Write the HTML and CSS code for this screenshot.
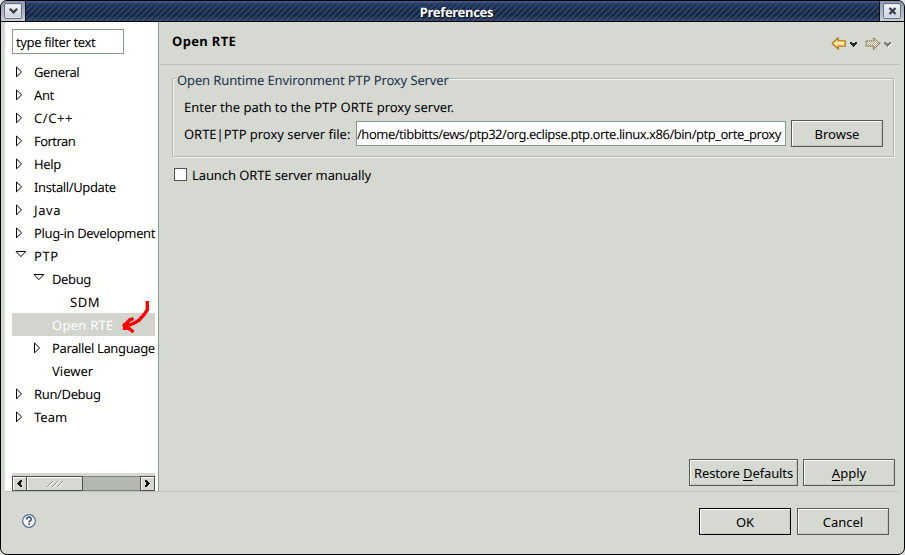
FILE: index.html
```
<!DOCTYPE html>
<html lang="en">
<head>
<meta charset="utf-8">
<title>Preferences</title>
<link rel="stylesheet" href="styles.css">
</head>
<body>
<svg class="defs" width="0" height="0">
  <symbol id="closed" viewBox="0 0 7 12"><path d="M.5 1v9.8L5.6 5.9z" fill="#fff" stroke="#000"/></symbol>
  <symbol id="open" viewBox="0 0 12 7"><path d="M1 .5h9.8L5.9 5.6z" fill="#fff" stroke="#000"/></symbol>
</svg>
<div class="window">
  <header class="titlebar">
    <div class="corner left"><span class="winbtn"><svg width="15" height="14" viewBox="0 0 15 14"><path d="M3.8 4.7l3.7 3.6 3.7-3.6" fill="none" stroke="#354052" stroke-width="2.3"/></svg></span></div>
    <h1><span>Preferences</span></h1>
    <div class="corner right"><span class="winbtn"><svg width="15" height="14" viewBox="0 0 15 14"><path d="M4.5 4l6 6M10.5 4l-6 6" fill="none" stroke="#354052" stroke-width="2.4"/></svg></span></div>
  </header>
  <main>
    <nav class="sidebar">
      <div class="filter tight">type filter text</div>
      <ul class="tree tight">
        <li><svg class="closed"><use href="#closed"/></svg>General</li>
        <li><svg class="closed"><use href="#closed"/></svg>Ant</li>
        <li class="wide"><svg class="closed"><use href="#closed"/></svg>C/C++</li>
        <li class="tighter"><svg class="closed"><use href="#closed"/></svg>Fortran</li>
        <li><svg class="closed"><use href="#closed"/></svg>Help</li>
        <li><svg class="closed"><use href="#closed"/></svg>Install/Update</li>
        <li class="wide"><svg class="closed"><use href="#closed"/></svg>Java</li>
        <li><svg class="closed"><use href="#closed"/></svg>Plug-in Development</li>
        <li class="wide"><svg class="open"><use href="#open"/></svg>PTP</li>
        <li class="l1"><svg class="open"><use href="#open"/></svg>Debug</li>
        <li class="l2 wide">SDM</li>
        <li class="l1 selected">Open RTE
          <svg class="mark" width="30" height="36" viewBox="0 0 30 36"><path d="M26.3 0v9l-3.5 5-5 5.5-4.5 2.5-6 2.5" fill="none" stroke="#f00" stroke-width="3.4"/><path d="M12.5 17.5l-4 1.5-5 5.5 5 3.5 4 3" fill="none" stroke="#f00" stroke-width="3.4"/><path d="M2 22h6v6l-2 1H2z" fill="#f00"/></svg>
        </li>
        <li class="l1"><svg class="closed"><use href="#closed"/></svg>Parallel Language</li>
        <li class="l1 normal">Viewer</li>
        <li><svg class="closed"><use href="#closed"/></svg>Run/Debug</li>
        <li class="normal"><svg class="closed"><use href="#closed"/></svg>Team</li>
      </ul>
      <div class="scrollbar">
        <span class="sbtn"><svg width="13" height="13" viewBox="0 0 13 13" shape-rendering="crispEdges"><path d="M4 6h1V5h1V4h1V3h2v2H8v3h1v2H7V9H6V8H5V7H4z" fill="#111"/></svg></span>
        <span class="thumb"><svg width="18" height="8" viewBox="0 0 18 8"><path d="M1 7l6-6M6 7l6-6M11 7l6-6" stroke="#8b9189"/><path d="M2 7.5l6-6M7 7.5l6-6M12 7.5l6-6" stroke="#fff"/></svg></span>
        <span class="trough"></span>
        <span class="sbtn"><svg width="13" height="13" viewBox="0 0 13 13" shape-rendering="crispEdges"><path d="M9 6H8V5H7V4H6V3H4v2h1v3H4v2h2V9h1V8h1V7h1z" fill="#111"/></svg></span>
      </div>
    </nav>
    <section class="page">
      <div class="pagehead">
        <h2>Open RTE</h2>
        <div class="history">
          <svg width="62" height="14" viewBox="0 0 62 14">
            <defs>
              <linearGradient id="gold" x2="0" y2="1"><stop stop-color="#fff8cc"/><stop offset="1" stop-color="#ffda70"/></linearGradient>
              <pattern id="dots" width="2" height="2" patternUnits="userSpaceOnUse"><path d="M0 0h2v2H0z" fill="#f3f0e6"/><path d="M0 0h1v1H0zM1 1h1v1H1z" fill="#b7a88c"/></pattern>
            </defs>
            <path d="M1.2 6.5l6-5.6v3h7v5.2h-7v3z" fill="url(#gold)" stroke="#b67810" stroke-width="1.3"/>
            <path d="M19 5h2v1h3V5h2v2h-1v1h-1v1h-1v1h-1V9h-1V8h-1V7h-1z" fill="#20231f"/>
            <path d="M48.6 6.5l-6-5.6v3h-7.5v5.2h7.5v3z" fill="url(#dots)" stroke="#86714c" stroke-width="1.2" stroke-dasharray="1.4 .7"/>
            <path d="M54 6h2v1h3V6h2v2h-1v1h-1v1h-1v1h-1v-1h-1V9h-1V8h-1z" fill="#fff"/>
            <path d="M53 5h2v1h3V5h2v2h-1v1h-1v1h-1v1h-1V9h-1V8h-1V7h-1z" fill="#7d817b"/>
          </svg>
        </div>
      </div>
      <div class="content">
        <fieldset>
          <legend>Open Runtime Environment PTP Proxy Server</legend>
          <p class="intro">Enter the path to the PTP ORTE proxy server.</p>
          <div class="pathrow">
            <label>ORTE|PTP proxy server file:</label>
            <div class="path">/home/tibbitts/ews/ptp32/org.eclipse.ptp.orte.linux.x86/bin/ptp_orte_proxy</div>
            <button>Browse</button>
          </div>
        </fieldset>
        <div class="check"><i></i><span>Launch ORTE server manually</span></div>
      </div>
      <div class="actions">
        <button class="restore">Restore <u>D</u>efaults</button>
        <button><u>A</u>pply</button>
      </div>
    </section>
  </main>
  <footer>
    <svg class="help" width="14" height="14" viewBox="0 0 14 14"><circle cx="7" cy="7" r="6.3" fill="#fff" stroke="#536b91" stroke-width="1.2"/><path d="M4.7 5.4c0-3 4.6-2.9 4.6-.2 0 1.6-2.2 1.6-2.2 3.2M7.1 9.3v1.8" fill="none" stroke="#3d5680" stroke-width="1.7"/></svg>
    <div class="buttons"><button class="default">OK</button><button>Cancel</button></div>
  </footer>
</div>
</body>
</html>
```
FILE: styles.css
```
* { box-sizing: border-box; }
body { margin: 0; width: 905px; height: 555px; overflow: hidden; background: #dfe1df; font: 13px/16px "Noto Sans", sans-serif; color: #000; text-rendering: geometricPrecision; }
.defs { display: none; }
.window { width: 905px; height: 555px; border: 1px solid #000; border-radius: 7px; background: #d5d9d2; overflow: hidden; display: flex; flex-direction: column; }
.titlebar { height: 21px; display: flex; flex: none; border-bottom: 1px solid #000; background: #192b49; }
.titlebar h1 { flex: 1; margin: 0; display: flex; justify-content: center; padding-left: 8px; font-size: 13px; line-height: 22px; letter-spacing: -.3px; color: #fff; text-shadow: 1px 1px #050c18; background: linear-gradient(#466094 0, rgba(38, 62, 105, .65) 3px, rgba(23, 42, 76, .1) 9px, rgba(12, 26, 51, .25) 15px, rgba(70, 95, 135, .5) 20px), repeating-linear-gradient(135deg, #182c4d 0 2.4px, #4d5f7b 2.8px 3.2px, #182c4d 3.6px 4.243px); }
.corner { width: 25px; background: linear-gradient(#8b98ad, #c9ced6); padding: 2px 0 0 3px; }
.corner.left { border-right: 1px solid #0b1422; }
.corner.right { border-left: 1px solid #0b1422; }
.winbtn { display: flex; width: 18px; height: 16px; align-items: center; justify-content: center; border: 1px solid #667184; border-radius: 2px; background: linear-gradient(#f5f6f7, #cbd1d8); box-shadow: inset 0 0 0 1px #dfe3e7; }
main { height: 469px; display: flex; flex: none; padding-left: 4px; }
.sidebar { width: 154px; flex: none; background: #fffffd; border-right: 1px solid #8b9d8e; padding: 7px 3px 0 7px; display: flex; flex-direction: column; }
.filter { width: 112px; height: 25px; flex: none; border: 1px solid #879a89; padding: 4px 3px; white-space: nowrap; }
.tight { letter-spacing: -.37px; }
.tighter { letter-spacing: -.55px; }
.wide { letter-spacing: .6px; }
.normal { letter-spacing: 0; }
.tree { margin: 6px 0 0; padding: 0; list-style: none; height: 413px; flex: none; width: 143px; }
.tree li { height: 23px; line-height: 23px; padding: 1px 0 0 22px; white-space: nowrap; position: relative; }
.tree li.l1 { padding-left: 40px; }
.tree li.l2 { padding-left: 58px; }
.tree li.selected { background: #d1d5ce; color: #fff; letter-spacing: .25px; }
.closed { position: absolute; left: 4px; top: 6px; width: 7px; height: 12px; }
.open { position: absolute; left: 3px; top: 7px; width: 12px; height: 7px; }
.l1 .closed { left: 22px; }
.l1 .open { left: 21px; }
.mark { position: absolute; left: 109px; top: -12px; }
.scrollbar { width: 143px; height: 18px; flex: none; display: flex; border-top: 3px solid #d3d8d0; }
.sbtn, .thumb, .trough { height: 15px; border: 1px solid #4d514b; background: #d5d9d2; }
.sbtn { width: 15px; display: flex; box-shadow: inset 1px 1px #fff; }
.thumb { width: 57px; margin-left: -1px; display: flex; align-items: center; justify-content: center; box-shadow: inset 1px 1px #fff; }
.trough { flex: 1; background: #b4b9b0; border-color: #7e857c; border-left: 0; border-right: 0; }
.page { flex: 1; display: flex; flex-direction: column; min-width: 0; }
.pagehead { height: 43px; margin: 0 4px 0 1px; border-bottom: 1px solid #bac1b9; display: flex; justify-content: space-between; padding: 11px 7px 0 12px; }
h2 { margin: 0; font-size: 13px; line-height: 16px; letter-spacing: .35px; }
.history { padding-top: 4px; }
.content { flex: 1; padding: 7px 10px 0 13px; }
fieldset { position: relative; margin: 6px 0 0; min-width: 0; height: 79px; border: 1px solid #b1b8af; box-shadow: 1px 1px #f0f2ed, inset 1px 1px #f0f2ed; padding: 0 10px 0 11px; }
legend { position: absolute; left: 3px; top: -7px; padding: 0 1px; background: #d5d9d2; color: #20304c; white-space: nowrap; line-height: 16px; letter-spacing: -.12px; }
.intro { margin: 20px 0 0; height: 21px; line-height: 17px; white-space: nowrap; }
.pathrow { display: flex; height: 27px; align-items: center; }
.pathrow label { width: 172px; flex: none; white-space: nowrap; letter-spacing: -.04px; }
.path { flex: 1; min-width: 0; height: 25px; margin-right: 5px; border: 1px solid #879a89; background: #fff; line-height: 24px; padding-left: 0; white-space: nowrap; overflow: hidden; letter-spacing: -.49px; }
button { width: 92px; height: 27px; flex: none; border: 1px solid #555b54; border-radius: 0; background: #d5d9d2; box-shadow: inset 1px 1px #fff, inset -1px -1px #c3c9c0; padding: 1px 0 0; font: inherit; color: #000; white-space: nowrap; }
.check { display: flex; align-items: center; gap: 5px; height: 18px; margin: 9px 0 0 2px; letter-spacing: -.1px; }
.check i { width: 13px; height: 13px; margin-top: -1px; border: 1px solid #515650; background: #fff; }
.actions { display: flex; justify-content: flex-end; gap: 5px; padding: 0 9px 5px 0; }
.restore { width: 109px; letter-spacing: -.12px; }
u { text-underline-offset: 2px; }
footer { margin: 0 5px 0 4px; height: 63px; border-top: 1px solid #bac4ba; display: flex; justify-content: space-between; padding: 16px 10px 0 17px; }
.help { margin-top: 6px; }
.buttons { display: flex; gap: 6px; }
.default { border-color: #000; }
```
